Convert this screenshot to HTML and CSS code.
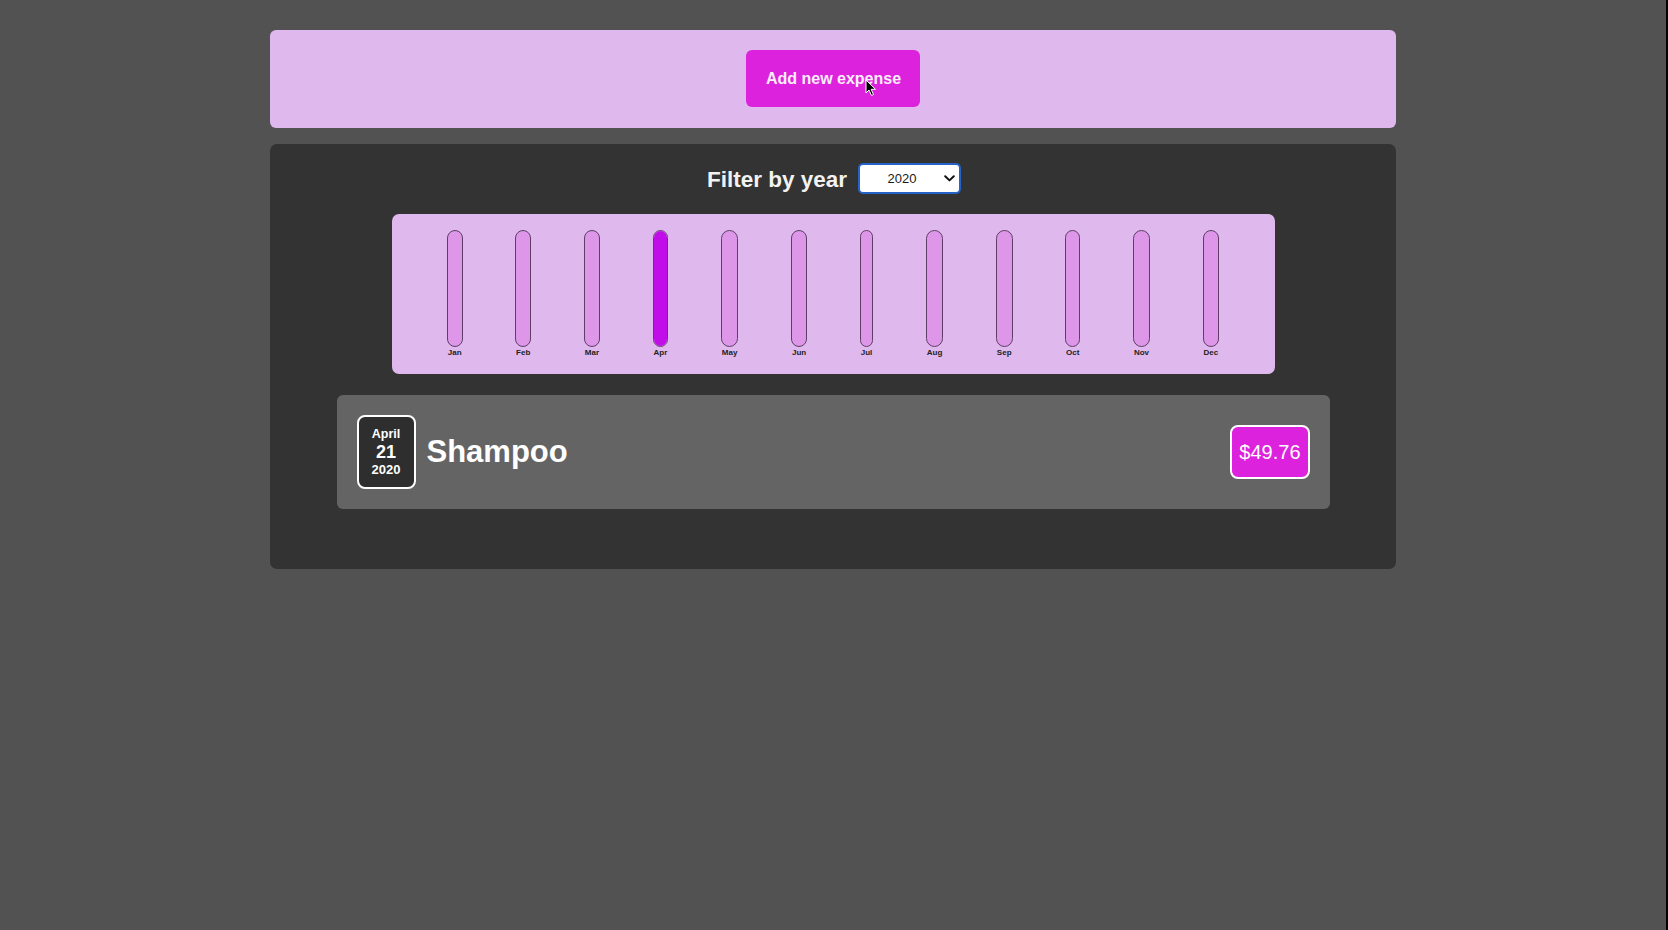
FILE: index.html
```html
<!DOCTYPE html>
<html lang="en">
<head>
<meta charset="utf-8">
<title>Expenses</title>
<link rel="stylesheet" href="styles.css">
</head>
<body>
<div class="app">
  <section class="new-expense">
    <button class="new-expense__btn" type="button">Add new expense<svg class="cursor" width="12" height="18" viewBox="0 0 12 18"><path d="M1 1 L1 14 L4 11 L6.5 16.5 L8.5 15.6 L6.2 10.3 L10.5 10.3 Z" fill="#000" stroke="#fff" stroke-width="1"/></svg></button>
  </section>
  <section class="expenses">
    <div class="filter">
      <label class="filter__label" for="year">Filter by year</label>
      <div class="filter__select-wrap">
        <select id="year" class="filter__select">
          <option>2022</option>
          <option>2021</option>
          <option selected>2020</option>
          <option>2019</option>
        </select>
        <svg class="filter__chevron" width="11" height="7" viewBox="0 0 11 7"><path d="M1.2 1.2 L5.5 5.4 L9.8 1.2" fill="none" stroke="#111" stroke-width="2" stroke-linecap="round" stroke-linejoin="round"/></svg>
      </div>
    </div>
    <div class="chart">
      <div class="chart-bar"><div class="chart-bar__inner"><div class="chart-bar__fill" style="height:0%"></div></div><div class="chart-bar__label">Jan</div></div>
      <div class="chart-bar"><div class="chart-bar__inner"><div class="chart-bar__fill" style="height:0%"></div></div><div class="chart-bar__label">Feb</div></div>
      <div class="chart-bar"><div class="chart-bar__inner"><div class="chart-bar__fill" style="height:0%"></div></div><div class="chart-bar__label">Mar</div></div>
      <div class="chart-bar"><div class="chart-bar__inner"><div class="chart-bar__fill" style="height:100%"></div></div><div class="chart-bar__label">Apr</div></div>
      <div class="chart-bar"><div class="chart-bar__inner"><div class="chart-bar__fill" style="height:0%"></div></div><div class="chart-bar__label">May</div></div>
      <div class="chart-bar"><div class="chart-bar__inner"><div class="chart-bar__fill" style="height:0%"></div></div><div class="chart-bar__label">Jun</div></div>
      <div class="chart-bar"><div class="chart-bar__inner"><div class="chart-bar__fill" style="height:0%"></div></div><div class="chart-bar__label">Jul</div></div>
      <div class="chart-bar"><div class="chart-bar__inner"><div class="chart-bar__fill" style="height:0%"></div></div><div class="chart-bar__label">Aug</div></div>
      <div class="chart-bar"><div class="chart-bar__inner"><div class="chart-bar__fill" style="height:0%"></div></div><div class="chart-bar__label">Sep</div></div>
      <div class="chart-bar"><div class="chart-bar__inner"><div class="chart-bar__fill" style="height:0%"></div></div><div class="chart-bar__label">Oct</div></div>
      <div class="chart-bar"><div class="chart-bar__inner"><div class="chart-bar__fill" style="height:0%"></div></div><div class="chart-bar__label">Nov</div></div>
      <div class="chart-bar"><div class="chart-bar__inner"><div class="chart-bar__fill" style="height:0%"></div></div><div class="chart-bar__label">Dec</div></div>
    </div>
    <ul class="expense-list">
      <li class="expense-item">
        <div class="expense-date">
          <div class="expense-date__month">April</div>
          <div class="expense-date__day">21</div>
          <div class="expense-date__year">2020</div>
        </div>
        <h2 class="expense-item__title">Shampoo</h2>
        <div class="expense-item__price">$49.76</div>
      </li>
    </ul>
  </section>
</div>
</body>
</html>
```
FILE: styles.css
```css
html {
  background: #525252;
  min-height: 100%;
  box-sizing: border-box;
  border-right: 2px solid #000;
}

body {
  margin: 0;
  font-family: "Liberation Sans", Arial, sans-serif;
  color: #fff;
}

.app {
  width: 1126px;
  margin: 0 auto;
  padding-top: 30px;
}

.new-expense {
  background: #dfb8ee;
  border-radius: 6px;
  padding: 20px 0 21px;
  display: flex;
  justify-content: center;
}

.new-expense__btn {
  position: relative;
  font-family: inherit;
  font-size: 16px;
  font-weight: bold;
  line-height: 19px;
  color: #fbeefb;
  background: #dd22dd;
  border: none;
  border-radius: 6px;
  padding: 19px 19px 19px 20px;
  cursor: pointer;
}

.cursor {
  position: absolute;
  left: 119px;
  top: 29px;
}

.expenses {
  margin-top: 16px;
  background: #333333;
  border-radius: 7px;
  padding: 19px 0 60px;
}

.filter {
  display: flex;
  justify-content: center;
  align-items: center;
  gap: 11px;
  padding-left: 2px;
}

.filter__label {
  font-size: 22.5px;
  font-weight: bold;
  color: #f2f2f2;
  line-height: 26px;
  padding-top: 2px;
}

.filter__select-wrap {
  position: relative;
  width: 103px;
  height: 31px;
}

.filter__select {
  appearance: none;
  -webkit-appearance: none;
  width: 103px;
  height: 31px;
  box-sizing: border-box;
  border: 2px solid #2563c9;
  border-radius: 5px;
  background: #fff;
  font-family: "Liberation Sans", Arial, sans-serif;
  font-size: 13px;
  color: #1a1a1a;
  padding: 0 15px 0 0;
  text-align: center;
  text-align-last: center;
  outline: none;
}

.filter__chevron {
  position: absolute;
  right: 6px;
  top: 12px;
  pointer-events: none;
}

.chart {
  width: 883px;
  height: 160px;
  box-sizing: border-box;
  margin: 20px auto 0;
  padding: 16px 29px 15px;
  background: #dfb8ee;
  border-radius: 7px;
  display: flex;
  justify-content: space-around;
}

.chart-bar {
  height: 100%;
  display: flex;
  flex-direction: column;
  align-items: center;
}

.chart-bar__inner {
  flex: 1;
  width: 100%;
  box-sizing: border-box;
  border: 1px solid #5d3f66;
  border-radius: 12px;
  background: #dd96e8;
  overflow: hidden;
  display: flex;
  flex-direction: column;
  justify-content: flex-end;
}

.chart-bar__fill {
  background: #c10ee8;
  width: 100%;
}

.chart-bar__label {
  font-size: 8px;
  font-weight: bold;
  line-height: 12px;
  color: #222;
  padding: 0 1px;
  text-align: center;
}

.expense-list {
  list-style: none;
  margin: 21px auto 0;
  padding: 0;
  width: 993px;
}

.expense-item {
  display: flex;
  align-items: center;
  padding: 20px;
  background: #646464;
  border-radius: 6px;
}

.expense-date {
  width: 59px;
  height: 74px;
  box-sizing: border-box;
  border: 2px solid #fff;
  border-radius: 8px;
  background: #2e2e2e;
  color: #fff;
  display: flex;
  flex-direction: column;
  align-items: center;
  justify-content: center;
}

.expense-date__month {
  font-size: 12.5px;
  font-weight: bold;
  line-height: 15px;
}

.expense-date__day {
  font-size: 18px;
  font-weight: bold;
  line-height: 20px;
}

.expense-date__year {
  font-size: 13px;
  font-weight: bold;
  line-height: 15px;
}

.expense-item__title {
  flex: 1;
  margin: 0 0 0 11px;
  font-size: 31px;
  font-weight: bold;
  color: #fff;
}

.expense-item__price {
  font-size: 20px;
  line-height: 23px;
  color: #fff;
  background: #dd22dd;
  border: 2px solid #fff;
  border-radius: 8px;
  padding: 13.5px 7px;
}
```
